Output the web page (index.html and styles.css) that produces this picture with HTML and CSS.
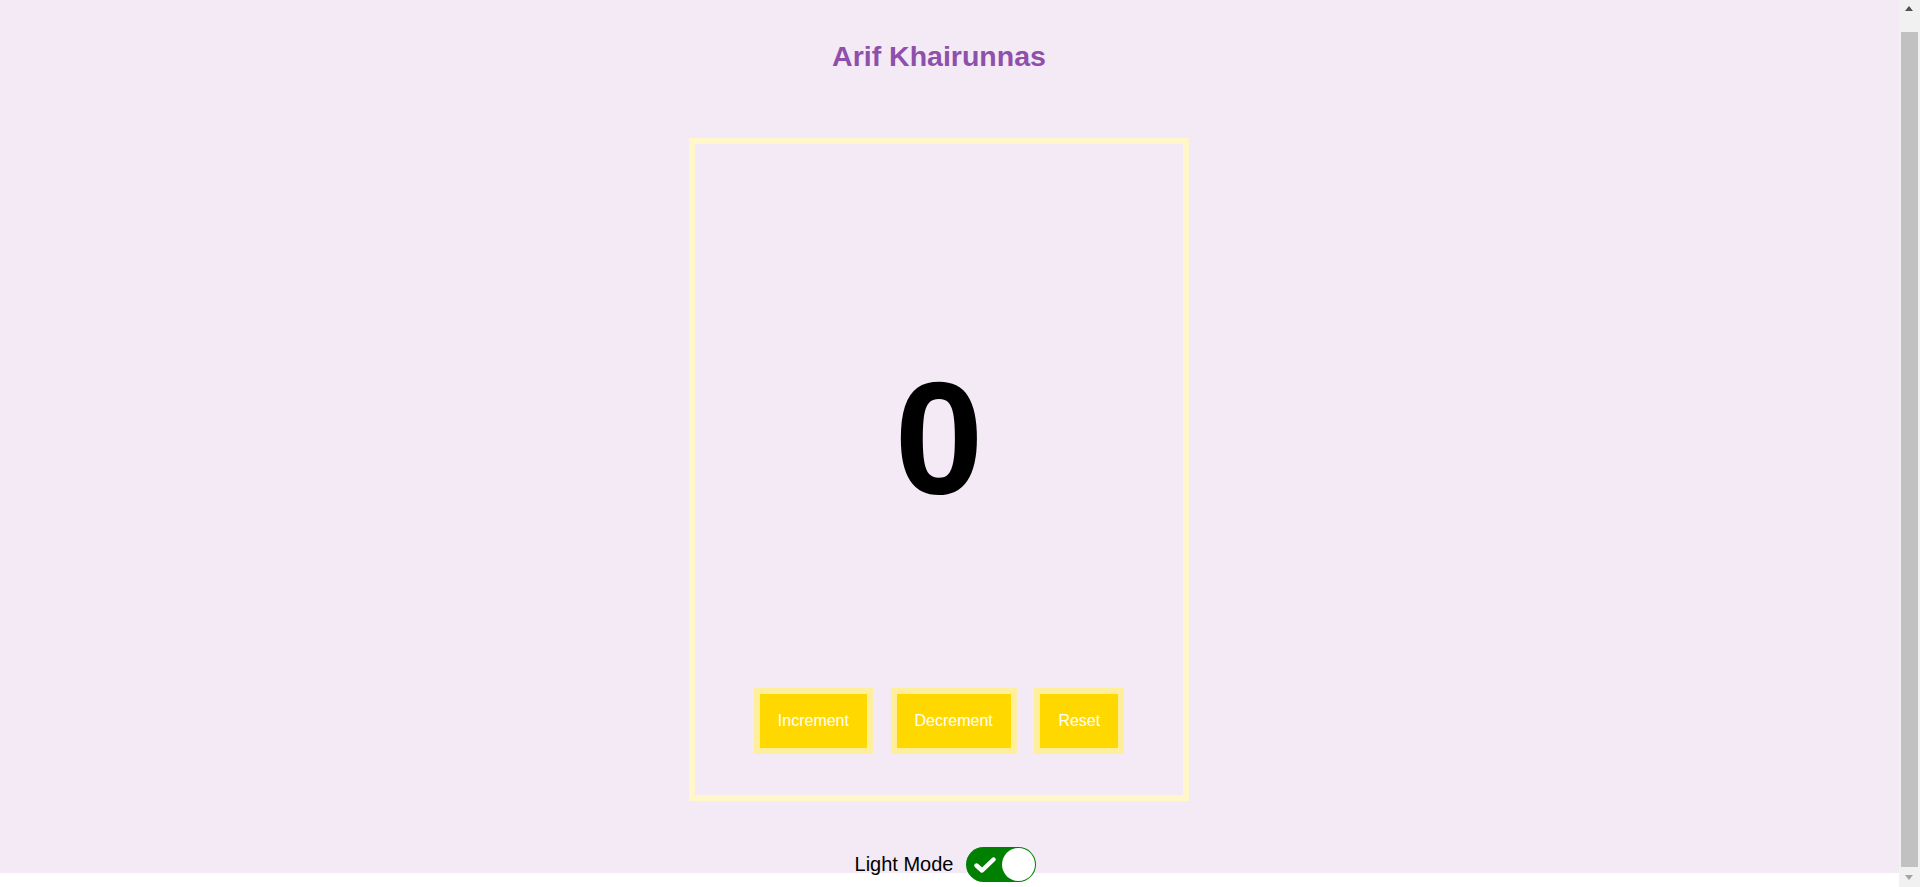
FILE: index.html
```html
<!DOCTYPE html>
<html lang="en">
<head>
<meta charset="utf-8">
<title>Counter</title>
<link rel="stylesheet" href="styles.css">
</head>
<body>
<div class="page">
  <h1 class="title">Arif Khairunnas</h1>
  <div class="counter">
    <div class="count">0</div>
    <div class="actions">
      <button class="btn">Increment</button>
      <button class="btn">Decrement</button>
      <button class="btn">Reset</button>
    </div>
  </div>
  <div class="mode">
    <span class="mode-label">Light Mode</span>
    <span class="switch">
      <svg class="check" width="22" height="16" viewBox="0 0 22 16"><path d="M2.5 8.5 L8 13.5 L19.5 2.5" fill="none" stroke="#fff" stroke-width="4.4" stroke-linecap="round" stroke-linejoin="round"/></svg>
      <span class="knob"></span>
    </span>
  </div>
</div>
<div class="scrollbar" aria-hidden="true">
  <span class="sb-up"></span>
  <span class="sb-thumb"></span>
  <span class="sb-down"></span>
</div>
</body>
</html>
```
FILE: styles.css
```css
html, body {
  margin: 0;
  padding: 0;
  background: #ffffff;
}
body {
  font-family: "Liberation Sans", Arial, sans-serif;
}
.page {
  background: #f3eaf6;
  height: 873px;
  box-sizing: border-box;
  padding: 40px 42px 0 0;
  margin-bottom: 25px;
  display: flex;
  flex-direction: column;
  align-items: center;
}
.page > * {
  flex-shrink: 0;
}
.title {
  margin: 0;
  font-size: 28.5px;
  font-weight: bold;
  line-height: normal;
  color: #8e50aa;
}
.counter {
  margin-top: 65px;
  width: 500px;
  height: 663px;
  box-sizing: border-box;
  border: 6px solid #fff6c9;
  padding: 202px 0 41px;
  display: flex;
  flex-direction: column;
  align-items: center;
}
.count {
  font-size: 160px;
  font-weight: bold;
  line-height: normal;
  color: #000;
}
.actions {
  margin-top: auto;
  display: flex;
  gap: 17.6px;
}
.btn {
  font-family: "Liberation Sans", Arial, sans-serif;
  font-size: 16px;
  line-height: 18px;
  color: #ffffff;
  background: #ffd800;
  border: 6px solid #ffef9c;
  padding: 18px 18px;
  margin: 0;
  border-radius: 0;
}
.mode {
  position: relative;
  z-index: 1;
  margin-top: 46px;
  display: flex;
  align-items: center;
  padding-left: 13px;
  gap: 13px;
}
.mode-label {
  font-size: 20px;
  color: #000;
}
.switch {
  position: relative;
  width: 70px;
  height: 35px;
  border-radius: 18px;
  background: #008000;
  display: block;
}
.check {
  position: absolute;
  left: 8px;
  top: 10px;
}
.knob {
  position: absolute;
  right: 1px;
  top: 1px;
  width: 33px;
  height: 33px;
  border-radius: 50%;
  background: #ffffff;
}

/* window scrollbar, drawn over the page edge */
.scrollbar {
  position: fixed;
  top: 0;
  right: 0;
  width: 21px;
  height: 887px;
  background: #f1f1f1;
  z-index: 2;
}
.sb-up {
  position: absolute;
  left: 6px;
  top: 6px;
  width: 0;
  height: 0;
  border-left: 4.5px solid transparent;
  border-right: 4.5px solid transparent;
  border-bottom: 5px solid #505050;
}
.sb-thumb {
  position: absolute;
  left: 2px;
  right: 2px;
  top: 32px;
  height: 835px;
  background: #c1c1c1;
}
.sb-down {
  position: absolute;
  left: 6px;
  top: 875px;
  width: 0;
  height: 0;
  border-left: 4.5px solid transparent;
  border-right: 4.5px solid transparent;
  border-top: 5px solid #a3a3a3;
}
```
